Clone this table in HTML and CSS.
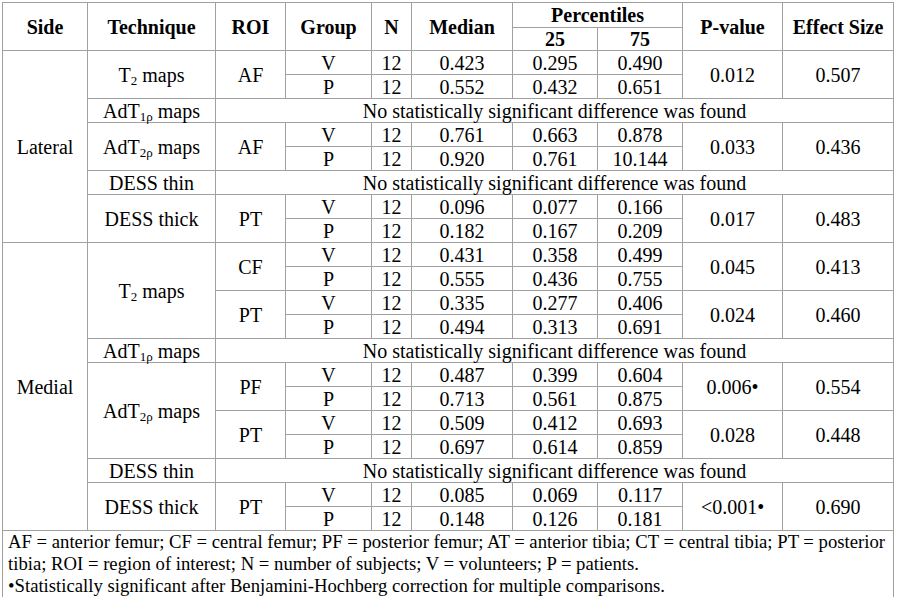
FILE: index.html
```html
<!DOCTYPE html>
<html>
<head>
<meta charset="utf-8">
<link rel="stylesheet" href="styles.css">
</head>
<body>
<table class="stats">
  <colgroup>
    <col class="c-side"><col class="c-tech"><col class="c-roi"><col class="c-group"><col class="c-n"><col class="c-median"><col class="c-p25"><col class="c-p75"><col class="c-pval"><col class="c-eff">
  </colgroup>
  <thead>
    <tr class="h1">
      <th rowspan="2">Side</th>
      <th rowspan="2">Technique</th>
      <th rowspan="2">ROI</th>
      <th rowspan="2">Group</th>
      <th rowspan="2">N</th>
      <th rowspan="2">Median</th>
      <th colspan="2">Percentiles</th>
      <th rowspan="2">P-value</th>
      <th rowspan="2">Effect Size</th>
    </tr>
    <tr class="h2">
      <th>25</th>
      <th>75</th>
    </tr>
  </thead>
  <tbody>
    <tr>
      <td rowspan="8">Lateral</td>
      <td rowspan="2">T<sub>2</sub> maps</td>
      <td rowspan="2">AF</td>
      <td>V</td><td>12</td><td>0.423</td><td>0.295</td><td>0.490</td>
      <td rowspan="2">0.012</td><td rowspan="2">0.507</td>
    </tr>
    <tr><td>P</td><td>12</td><td>0.552</td><td>0.432</td><td>0.651</td></tr>
    <tr>
      <td>AdT<sub>1ρ</sub> maps</td>
      <td colspan="8">No statistically significant difference was found</td>
    </tr>
    <tr>
      <td rowspan="2">AdT<sub>2ρ</sub> maps</td>
      <td rowspan="2">AF</td>
      <td>V</td><td>12</td><td>0.761</td><td>0.663</td><td>0.878</td>
      <td rowspan="2">0.033</td><td rowspan="2">0.436</td>
    </tr>
    <tr><td>P</td><td>12</td><td>0.920</td><td>0.761</td><td>10.144</td></tr>
    <tr>
      <td>DESS thin</td>
      <td colspan="8">No statistically significant difference was found</td>
    </tr>
    <tr>
      <td rowspan="2">DESS thick</td>
      <td rowspan="2">PT</td>
      <td>V</td><td>12</td><td>0.096</td><td>0.077</td><td>0.166</td>
      <td rowspan="2">0.017</td><td rowspan="2">0.483</td>
    </tr>
    <tr><td>P</td><td>12</td><td>0.182</td><td>0.167</td><td>0.209</td></tr>

    <tr>
      <td rowspan="12">Medial</td>
      <td rowspan="4">T<sub>2</sub> maps</td>
      <td rowspan="2">CF</td>
      <td>V</td><td>12</td><td>0.431</td><td>0.358</td><td>0.499</td>
      <td rowspan="2">0.045</td><td rowspan="2">0.413</td>
    </tr>
    <tr><td>P</td><td>12</td><td>0.555</td><td>0.436</td><td>0.755</td></tr>
    <tr>
      <td rowspan="2">PT</td>
      <td>V</td><td>12</td><td>0.335</td><td>0.277</td><td>0.406</td>
      <td rowspan="2">0.024</td><td rowspan="2">0.460</td>
    </tr>
    <tr><td>P</td><td>12</td><td>0.494</td><td>0.313</td><td>0.691</td></tr>
    <tr>
      <td>AdT<sub>1ρ</sub> maps</td>
      <td colspan="8">No statistically significant difference was found</td>
    </tr>
    <tr>
      <td rowspan="4">AdT<sub>2ρ</sub> maps</td>
      <td rowspan="2">PF</td>
      <td>V</td><td>12</td><td>0.487</td><td>0.399</td><td>0.604</td>
      <td rowspan="2">0.006•</td><td rowspan="2">0.554</td>
    </tr>
    <tr><td>P</td><td>12</td><td>0.713</td><td>0.561</td><td>0.875</td></tr>
    <tr>
      <td rowspan="2">PT</td>
      <td>V</td><td>12</td><td>0.509</td><td>0.412</td><td>0.693</td>
      <td rowspan="2">0.028</td><td rowspan="2">0.448</td>
    </tr>
    <tr><td>P</td><td>12</td><td>0.697</td><td>0.614</td><td>0.859</td></tr>
    <tr>
      <td>DESS thin</td>
      <td colspan="8">No statistically significant difference was found</td>
    </tr>
    <tr>
      <td rowspan="2">DESS thick</td>
      <td rowspan="2">PT</td>
      <td>V</td><td>12</td><td>0.085</td><td>0.069</td><td>0.117</td>
      <td rowspan="2">&lt;0.001•</td><td rowspan="2">0.690</td>
    </tr>
    <tr><td>P</td><td>12</td><td>0.148</td><td>0.126</td><td>0.181</td></tr>
  </tbody>
  <tfoot>
    <tr>
      <td colspan="10" class="note">AF = anterior femur; CF = central femur; PF = posterior femur; AT = anterior tibia; CT = central tibia; PT = posterior<br>tibia; ROI = region of interest; N = number of subjects; V = volunteers; P = patients.<br>•Statistically significant after Benjamini-Hochberg correction for multiple comparisons.</td>
    </tr>
  </tfoot>
</table>
</body>
</html>
```
FILE: styles.css
```css
html, body {
  background: #ffffff;
}
body {
  margin: 2px 0 0 2px;
  font-family: "DejaVu Serif", "Liberation Serif", "Noto Serif", FreeSerif, "Nimbus Roman", serif;
  font-size: 20px;
  color: #000000;
}
.stats {
  border-collapse: collapse;
  table-layout: fixed;
  width: 892px;
  font-family: "Liberation Serif", "DejaVu Serif", "Noto Serif", FreeSerif, "Nimbus Roman", serif;
}
.stats th,
.stats td {
  border: 1px solid #a0a0a0;
  padding: 0;
  text-align: center;
  vertical-align: middle;
  line-height: 22px;
  white-space: nowrap;
}
.stats th {
  font-weight: bold;
}
.stats sub {
  font-size: 13px;
  line-height: 0;
  vertical-align: -3px;
}
.stats tbody tr {
  height: 24px;
}
.stats .h1 {
  height: 25px;
}
.stats .h2 {
  height: 23px;
}
.stats .note {
  text-align: left;
  padding: 0 0 0 5px;
  white-space: nowrap;
  line-height: 22px;
  font-size: 18.7px;
}
.c-side { width: 85px; }
.c-tech { width: 128px; }
.c-roi { width: 70px; }
.c-group { width: 86px; }
.c-n { width: 40px; }
.c-median { width: 101px; }
.c-p25 { width: 85px; }
.c-p75 { width: 85px; }
.c-pval { width: 100px; }
.c-eff { width: 111px; }
```
